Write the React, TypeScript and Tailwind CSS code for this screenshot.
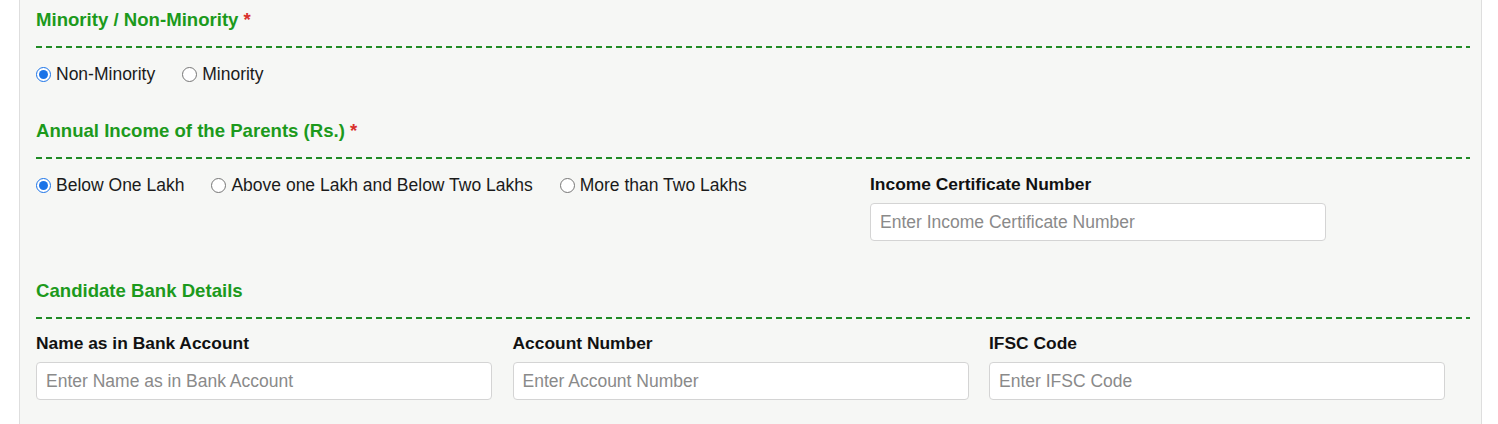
import React, { useState } from "react";

const font = { fontFamily: '"Liberation Sans", Arial, sans-serif' };

function Heading({ text, req }: { text: string; req?: boolean }) {
    return (
        <div>
            <h3 className="text-[18.6px] font-bold text-[#1c9a1c] leading-[24px]">
                {text}
                {req && <span className="text-[#d9302c]"> *</span>}
            </h3>
            <div className="mt-[14px] h-[2px] w-full bg-[repeating-linear-gradient(to_right,#1f8c25_0px,#1f8c25_6px,transparent_6px,transparent_10px)]" />
        </div>
    );
}

function Radio({ label, checked, onClick }: { label: string; checked: boolean; onClick: () => void }) {
    return (
        <label className="flex items-center cursor-pointer" onClick={onClick}>
            <span
                className={
                    checked
                        ? "w-[15px] h-[15px] rounded-full border border-[#1a73e8] flex items-center justify-center bg-white mr-[5px]"
                        : "w-[15px] h-[15px] rounded-full border border-[#767676] bg-white mr-[5px]"
                }
            >
                {checked && <span className="w-[9px] h-[9px] rounded-full bg-[#1a73e8]" />}
            </span>
            <span>{label}</span>
        </label>
    );
}

function Field({ label, placeholder, width }: { label: string; placeholder: string; width: string }) {
    return (
        <div className={width}>
            <div className="font-bold text-[17.4px] text-[#111] leading-[20px]">{label}</div>
            <input
                className="mt-[9px] w-full h-[38px] rounded-[4px] border border-[#d4d4d4] bg-white px-[9px] text-[17.5px] placeholder:text-[#8a8a8a] outline-none"
                placeholder={placeholder}
            />
        </div>
    );
}

export default function App() {
    const [minority, setMinority] = useState("non");
    const [income, setIncome] = useState("below");

    return (
        <div className="bg-white min-h-[424px] pl-[19px] pr-[16px]" style={font}>
            <div className="bg-[#f6f7f5] border-x border-[#dedede] min-h-[424px] pl-[16px] pr-[11px] pt-[8px] text-[17.5px] text-[#1b1b1b]">
                <Heading text="Minority / Non-Minority" req />
                <div className="flex gap-[27px] mt-[16px] leading-[20px]">
                    <Radio label="Non-Minority" checked={minority === "non"} onClick={() => setMinority("non")} />
                    <Radio label="Minority" checked={minority === "min"} onClick={() => setMinority("min")} />
                </div>

                <div className="mt-[35px]">
                    <Heading text="Annual Income of the Parents (Rs.)" req />
                </div>
                <div className="flex mt-[15px]">
                    <div className="w-[834px] flex gap-[27px] leading-[20px] h-[20px] mt-[1px]">
                        <Radio label="Below One Lakh" checked={income === "below"} onClick={() => setIncome("below")} />
                        <Radio label="Above one Lakh and Below Two Lakhs" checked={income === "mid"} onClick={() => setIncome("mid")} />
                        <Radio label="More than Two Lakhs" checked={income === "more"} onClick={() => setIncome("more")} />
                    </div>
                    <Field label="Income Certificate Number" placeholder="Enter Income Certificate Number" width="w-[456px]" />
                </div>

                <div className="mt-[38px]">
                    <Heading text="Candidate Bank Details" />
                </div>
                <div className="grid grid-cols-[456px_456px_456px] gap-x-[20.5px] mt-[14px]">
                    <Field label="Name as in Bank Account" placeholder="Enter Name as in Bank Account" width="w-full" />
                    <Field label="Account Number" placeholder="Enter Account Number" width="w-full" />
                    <Field label="IFSC Code" placeholder="Enter IFSC Code" width="w-full" />
                </div>
            </div>
        </div>
    );
}
